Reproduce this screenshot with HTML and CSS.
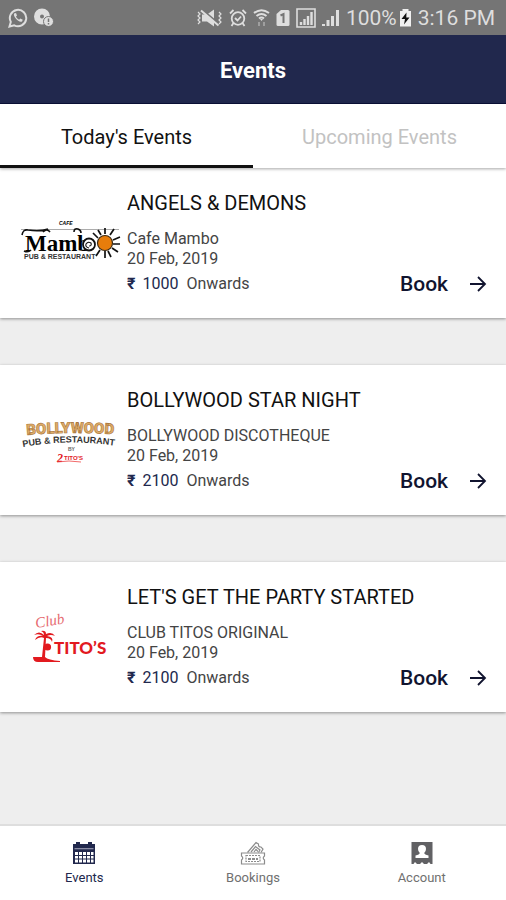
FILE: index.html
```html
<!DOCTYPE html>
<html lang="en">
<head>
<meta charset="utf-8">
<meta name="viewport" content="width=device-width, initial-scale=1">
<title>Events</title>
<link rel="stylesheet" href="styles.css">
</head>
<body>
<div class="app">
  <div class="status">
    <div class="status-group">
      <svg width="20" height="20" viewBox="0 0 20 20" fill="none" stroke="currentColor" stroke-width="2" aria-hidden="true"><path d="M1.500 18.500l1.300-4.600A8.200 8.200 0 1 1 6.200 17.300z"/><path d="M6 5.500C5 8.500 10.500 15 14 13.500l.8-1.700-2.500-1.300-1.200 1.200C9.500 11 8.500 9.700 8 8.500l1-1.100L8 5z" fill="currentColor" stroke="none"/></svg>
      <svg width="20" height="20" viewBox="0 0 20 20" aria-hidden="true"><path fill="currentColor" fill-rule="evenodd" d="M8 .5a8 8 0 1 0 0 16 8 8 0 0 0 0-16zM8 6.500a2 2 0 1 1 0 4 2 2 0 0 1 0-4z"/><circle cx="14.500" cy="13.500" r="5" fill="currentColor" stroke="#757575"/><path d="M14.500 10.500v3.500M14.500 15v1.500" stroke="#757575" stroke-width="1.500"/></svg>
    </div>
    <div class="status-group status-right">
      <svg width="26" height="18" viewBox="0 0 26 18" fill="none" stroke="currentColor" aria-hidden="true"><path d="M5 5.500h5l7-5v17l-7-5H5z" fill="currentColor" stroke="none"/><path d="M5.500 1l16 13.500" stroke="#757575" stroke-width="2"/><path d="M4 1.500l17.500 15" stroke-width="2"/><path d="M1 3l2 2-2 2 2 2-2 2 2 2-2 2M22 3l2 2-2 2 2 2-2 2 2 2-2 2" stroke-width="1.200"/></svg>
      <svg width="18" height="18" viewBox="0 0 18 18" fill="none" stroke="currentColor" stroke-width="1.800" aria-hidden="true"><circle cx="9" cy="9.500" r="6.300"/><path d="M1 4.500L4.500 1M17 4.500L13.500 1M4.500 14L2.500 17M13.500 14l2 3M6 9l2.500 2.500L12 7.500"/></svg>
      <svg width="17" height="18" viewBox="0 0 17 18" fill="none" stroke="currentColor" stroke-width="2" aria-hidden="true"><path d="M1 4Q8.500-1.500 16 4M3.500 7Q8.500 3 13.500 7M6 9.500q2.500-2 5 0"/><path d="M7 10h3l-1.500 2z" fill="currentColor" stroke="none"/><path d="M6 17v-4M11 13v4" stroke-width="2" opacity=".4"/></svg>
      <svg width="14" height="18" viewBox="0 0 14 18" aria-hidden="true"><path fill="currentColor" d="M5 1h7q1.500 0 1.500 1.500v13q0 1.500-1.500 1.500H2Q.5 17 .5 15.500V5z"/><path d="M4.500 6.500L7.500 5v9" fill="none" stroke="#757575" stroke-width="2"/></svg>
      <svg width="20" height="20" viewBox="0 0 20 20" fill="none" stroke="currentColor" aria-hidden="true"><path d="M1 1h18v18H1z" stroke-width="1.600"/><path d="M5 17v-3M8.500 17v-6M12 17V8M15.500 17V4" stroke-width="2.400"/></svg>
      <svg width="18" height="18" viewBox="0 0 18 18" stroke="currentColor" stroke-width="3" aria-hidden="true"><path d="M1.500 17v-2M6 17v-6M10.500 17V7M15.500 17V1"/></svg>
      <span class="battery">100%<svg width="13" height="18" viewBox="0 0 13 18" aria-hidden="true"><path fill="#f0f0f0" d="M3.500 2V0h6v2H12v15.500H1V2z"/><path fill="#111" d="M7.500 3.500L2.500 10H6l-1 5.500L10.500 8.500H7.300z"/></svg></span>
      <span>3:16 PM</span>
    </div>
  </div>

  <header class="header"><h1>Events</h1></header>

  <div class="tabs" role="tablist">
    <button class="tab tab-active" role="tab" aria-selected="true">Today's Events</button>
    <button class="tab" role="tab" aria-selected="false">Upcoming Events</button>
  </div>

  <main class="list">
    <article class="card">
      <svg class="logo" viewBox="0 0 104 56" role="img" aria-label="Cafe Mambo">
        <text x="40" y="10" class="mambo-cafe">CAFE</text>
        <path d="M2 14.500h98" stroke="#888" stroke-width=".7"/>
        <text x="6" y="36" class="mambo-name">Mamb</text>
        <path d="M3 20q1-6 6-5 12 2 20-1M24 17q4-4 7 0M5 36q4 2 7-1M55 17q0-4 4-3 3 1 3 4" fill="none" stroke="#111" stroke-width="1.600"/>
        <circle cx="70" cy="29.500" r="6" fill="#fff" stroke="#111" stroke-width="1.800"/>
        <path d="M70 33q-4-1-3-4 2-3 5-1 1 3-2 3" fill="none" stroke="#111" stroke-width="1.100"/>
        <path d="M86 19v-6M91 20l4-6M94 25l7-3M94 29h7M93 33l6 4M89 36l3 6M86 36v7M81 35l-4 6M79 23l-5-5M82 20l-3-5" stroke="#111" stroke-width="1.700"/>
        <circle cx="86" cy="28" r="7.500" fill="#e77d0b" stroke="#3c2a14" stroke-width="1.200"/>
        <text x="5" y="44" class="mambo-sub">PUB &amp; RESTAURANT</text>
      </svg>
      <div class="info">
        <h2>ANGELS &amp; DEMONS</h2>
        <p>Cafe Mambo</p>
        <p>20 Feb, 2019</p>
        <p class="price"><span class="amount"><b>₹</b><span>1000</span></span>Onwards</p>
      </div>
      <button class="book">Book<svg width="18" height="18" viewBox="0 0 18 18" fill="none" stroke="currentColor" stroke-width="1.800" aria-hidden="true"><path d="M1 9h15M9 2l7 7-7 7"/></svg></button>
    </article>

    <article class="card">
      <svg class="logo" viewBox="0 0 104 56" role="img" aria-label="Bollywood Pub and Restaurant">
        <defs>
          <path id="arc-top" d="M8 23Q52 19 102 23"/>
          <path id="arc-sub" d="M4 35Q52 26 104 35"/>
        </defs>
        <text class="bolly-name"><textPath href="#arc-top">BOLLYWOOD</textPath></text>
        <text class="bolly-sub"><textPath href="#arc-sub">PUB &amp; RESTAURANT</textPath></text>
        <text x="49" y="39" class="bolly-by">BY</text>
        <text x="38" y="50" class="bolly-two">2</text>
        <text x="45" y="48" class="bolly-tag">TITO'S</text>
        <path d="M38 50q12-2 24 0" fill="none" stroke="#e44" stroke-width=".8"/>
      </svg>
      <div class="info">
        <h2>BOLLYWOOD STAR NIGHT</h2>
        <p>BOLLYWOOD DISCOTHEQUE</p>
        <p>20 Feb, 2019</p>
        <p class="price"><span class="amount"><b>₹</b><span>2100</span></span>Onwards</p>
      </div>
      <button class="book">Book<svg width="18" height="18" viewBox="0 0 18 18" fill="none" stroke="currentColor" stroke-width="1.800" aria-hidden="true"><path d="M1 9h15M9 2l7 7-7 7"/></svg></button>
    </article>

    <article class="card">
      <svg class="logo" viewBox="0 0 104 56" role="img" aria-label="Club Tito's">
        <text x="17" y="19" class="tito-club" transform="rotate(-9 17 19)">Club</text>
        <path d="M25 26q-5-5-10 0 5-2 9 1-6-1-8 4 5-4 9-2l-2 19h3l1-19q5 0 6 4 2-5-5-6 4-2 8 0-3-5-9-2 0-4-5-3 3 1 3 4z" fill="#e21a1f"/>
        <circle cx="28.500" cy="38" r="3.600" fill="#e21a1f"/>
        <path d="M14 48h12q3 3 15 4v1H19q-5 0-5-5z" fill="#e21a1f"/>
        <text x="35" y="45" class="tito-name">TITO’S</text>
      </svg>
      <div class="info">
        <h2>LET'S GET THE PARTY STARTED</h2>
        <p>CLUB TITOS ORIGINAL</p>
        <p>20 Feb, 2019</p>
        <p class="price"><span class="amount"><b>₹</b><span>2100</span></span>Onwards</p>
      </div>
      <button class="book">Book<svg width="18" height="18" viewBox="0 0 18 18" fill="none" stroke="currentColor" stroke-width="1.800" aria-hidden="true"><path d="M1 9h15M9 2l7 7-7 7"/></svg></button>
    </article>
  </main>

  <nav class="nav">
    <a class="nav-item nav-active" href="#events">
      <svg width="24" height="24" viewBox="0 0 24 24" aria-hidden="true"><path fill="currentColor" d="M1 3h3V1h4v2h8V1h4v2h3v20H1z"/><path fill="#8b8da5" d="M2.500 7h19v1.300h-19z"/><path fill="#fff" d="M3 11h3v3H3zM7 11h3v3H7zM11 11h3v3h-3zM15 11h3v3h-3zM19 11h2.500v3H19zM3 15h3v2.500H3zM7 15h3v2.500H7zM11 15h3v2.500h-3zM15 15h3v2.500h-3zM19 15h2.500v2.500H19zM3 18.500h3v3H3zM7 18.500h3v3H7zM11 18.500h3v3h-3zM15 18.500h3v3h-3zM19 18.500h2.500v3H19z"/></svg>
      Events
    </a>
    <a class="nav-item" href="#bookings">
      <svg width="26" height="24" viewBox="0 0 26 24" fill="none" stroke="#8c8c8c" stroke-width="1.200" aria-hidden="true"><path d="M1.500 12h23v3q-2.500 2 0 4v4h-23v-4q2.500-2 0-4z"/><path d="M6 14.500h14v6H6z" stroke-dasharray="2 1"/><path d="M8 18h10" stroke-width="2" stroke-dasharray="3 1"/><path d="M7.500 11.500L16 1.500l2.500 1.500q-.5 3 2.500 3l2 2-2 3.500M11 11l4.500-5.500L20 9l-1.500 2.500M14 11l2-2.500 2 2"/></svg>
      Bookings
    </a>
    <a class="nav-item" href="#account">
      <svg width="22" height="24" viewBox="0 0 22 24" aria-hidden="true"><path fill="#616164" d="M.5 1h21v22h-2l-1.500-2-2 2h-3l-2-2-2 2H6l-2-2-1.500 2h-2z"/><path fill="#fff" d="M11 4a4 4 0 0 1 4 4q0 2.500-1.800 4 .3 1.500 4.300 2.500v2.500h-13v-2.500q4-1 4.300-2.500Q7 10.500 7 8a4 4 0 0 1 4-4z"/></svg>
      Account
    </a>
  </nav>
</div>
</body>
</html>
```

FILE: styles.css
```css
* {
  box-sizing: border-box;
}

body {
  margin: 0;
  font-family: Roboto, "Liberation Sans", sans-serif;
  color: #111;
  background: #eee;
}

h1,
h2,
p {
  margin: 0;
}

button {
  padding: 0;
  border: 0;
  background: none;
  font-family: inherit;
  cursor: pointer;
}

svg {
  flex: none;
}

.app {
  display: flex;
  flex-direction: column;
  min-height: 100vh;
}

.status {
  display: flex;
  justify-content: space-between;
  align-items: center;
  height: 35px;
  padding: 0 11px 0 8px;
  background: #757575;
  color: #dedede;
  font-size: 21px;
}

.status-group {
  display: flex;
  align-items: center;
  gap: 6px;
}

.battery {
  display: flex;
  align-items: center;
  gap: 2px;
}

.header {
  display: flex;
  justify-content: center;
  align-items: center;
  height: 69px;
  padding-top: 2px;
  background: #21284d;
  border-bottom: 1px solid #0b1038;
  color: #fff;
}

.header h1 {
  font-size: 22px;
  font-weight: 700;
}

.tabs {
  display: flex;
  height: 64px;
  background: #fff;
  box-shadow: 0 1px 3px rgba(0, 0, 0, 0.35);
  z-index: 1;
}

.tab {
  flex: 1;
  padding-top: 4px;
  border-bottom: 3px solid transparent;
  font-size: 20px;
  color: #c2c2c2;
}

.tab-active {
  border-bottom-color: #111;
  color: #111;
}

.list {
  display: flex;
  flex: 1;
  flex-direction: column;
  gap: 47px;
}

.card {
  display: flex;
  gap: 4px;
  padding: 24px 19px;
  background: #fff;
  box-shadow: 0 1px 3px rgba(0, 0, 0, 0.4);
}

.logo {
  align-self: center;
  width: 104px;
  height: 56px;
}

.info {
  flex: 1;
  min-width: 0;
  white-space: nowrap;
  font-size: 16px;
  line-height: 20px;
  color: #444;
}

.info h2 {
  margin-bottom: 15px;
  font-size: 20px;
  font-weight: 400;
  line-height: 22px;
  color: #111;
}

.price {
  display: flex;
  gap: 8px;
  margin-top: 5px;
}

.amount {
  display: flex;
  gap: 7px;
  color: #21284d;
}

.book {
  display: flex;
  align-items: center;
  align-self: flex-end;
  gap: 21px;
  font-size: 21px;
  font-weight: 500;
  line-height: 20px;
  color: #11142f;
}

.nav {
  display: flex;
  height: 76px;
  background: #fff;
  border-top: 2px solid #dedede;
}

.nav-item {
  display: flex;
  flex: 1;
  flex-direction: column;
  align-items: center;
  gap: 5px;
  padding-top: 15px;
  font-size: 13px;
  line-height: 16px;
  color: #707070;
  text-decoration: none;
}

.nav-active {
  color: #21284d;
}

.mambo-cafe {
  font: italic 700 5px "Liberation Sans", sans-serif;
}

.mambo-name {
  font: 700 23px "Liberation Serif", serif;
}

.mambo-sub {
  font: 700 7px "Liberation Sans", sans-serif;
  fill: #333;
}

.bolly-name {
  font: 900 15px Roboto, "Liberation Sans", sans-serif;
  fill: #e0ad68;
  stroke: #a9763c;
  stroke-width: 0.6px;
}

.bolly-sub {
  font: 700 9px "Liberation Sans", sans-serif;
  fill: #333;
}

.bolly-by {
  font: 700 5px "Liberation Sans", sans-serif;
  fill: #666;
}

.bolly-two {
  font: italic 700 12px "Liberation Serif", serif;
  fill: #e21a1f;
}

.bolly-tag {
  font: 700 6px "Liberation Sans", sans-serif;
  fill: #e21a1f;
}

.tito-club {
  font: italic 15px "Liberation Serif", serif;
  fill: #e66a70;
}

.tito-name {
  font: 900 17px Lato, "Liberation Sans", sans-serif;
  fill: #e21a1f;
}
```
